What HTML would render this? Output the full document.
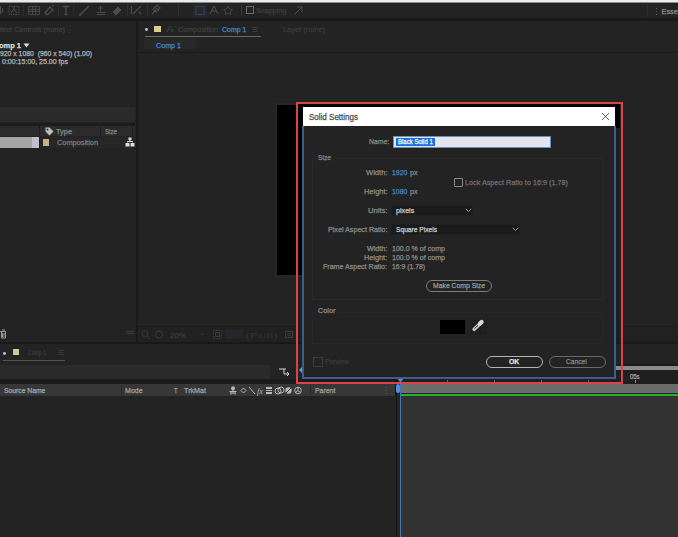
<!DOCTYPE html>
<html><head><meta charset="utf-8">
<style>
*{margin:0;padding:0;box-sizing:border-box}
html,body{width:678px;height:537px;overflow:hidden;background:#232323;font-family:"Liberation Sans",sans-serif;position:relative}
.a{position:absolute}
.t{position:absolute;white-space:pre;transform-origin:0 0;-webkit-text-stroke:0.25px currentColor}
svg{position:absolute;overflow:visible}
</style></head><body>
<div class="a" style="left:0px;top:0px;width:678px;height:2px;background:#ececec;"></div>
<div class="a" style="left:0px;top:2px;width:678px;height:1px;background:#8a8a8a;"></div>
<div class="a" style="left:0px;top:3px;width:678px;height:15px;background:#232323;"></div>
<div class="a" style="left:0px;top:18px;width:678px;height:3px;background:#191919;"></div>
<svg style="left:0;top:0" width="678" height="20" viewBox="0 0 678 20" fill="none" stroke="#4c4c4c" stroke-width="1">
<path d="M0.5 6v8M2.5 8v5"/>
<path d="M9 6.5h10v8h-10z" stroke-dasharray="1.5 1"/><path d="M11 13l3-4 3 4M14 9v-2"/>
<path d="M23.5 4v12" stroke="#2e2e2e"/>
<path d="M28.5 6.5h11v8h-11z M28.5 9.5h11M28.5 11.5h11M32.5 6.5v8M35.5 6.5v8" stroke-width="0.8"/>
<path d="M45 13l5-6 3 3-6 5z M52 6l2-1" stroke-width="1.2"/>
<path d="M58.5 4v12" stroke="#2e2e2e"/>
<path d="M62.5 6.5h7M66 6.5v8M64.5 14.5h3" stroke-width="1.3"/>
<path d="M73.5 4v12" stroke="#2e2e2e"/>
<path d="M80 15l9-9" stroke-width="1.5"/><path d="M79.5 15.5l1.5-1.5" stroke-width="2"/>
<path d="M100.5 6v5M98 8h5M96.5 12.5h9M97 14.5h8" stroke-width="1.2"/>
<path d="M113 12l5-5 3 3-5 5z" fill="#4c4c4c"/>
<path d="M127.5 4v12" stroke="#2e2e2e"/>
<path d="M131.5 6v8M133 14l8-8M139 12l2 2" stroke-width="1.2"/>
<path d="M147.5 4v12" stroke="#2e2e2e"/>
<path d="M152 14l4-4M155 7l4 4M157 5l3 3-4 4-3-3z" stroke-width="1.1"/>
<path d="M178.5 4v12" stroke="#2e2e2e"/>
<rect x="193" y="4" width="14" height="13" fill="#262833" stroke="none"/>
<path d="M196 6.5h8v8h-8z" stroke="#3e4048"/>
<path d="M210 14l4-8 4 8M212 11h4" stroke="#4e4e4e"/>
<path d="M228 6l1.5 3 3 .5-2.2 2 .7 3-3-1.5-3 1.5.7-3-2.2-2 3-.5z" stroke="#4a4a4a" stroke-width="0.9"/>
<path d="M241.5 5v11" stroke="#3a3a3a"/>
<rect x="246.5" y="6.5" width="7" height="7" stroke="#6a6a6a"/>
<path d="M295 14l7-7M297 7h5v5" stroke="#4a4a4a" stroke-width="1"/>
<path d="M647.5 4v13" stroke="#2c2c2c"/>
<path d="M656.5 8v1M656.5 11v1M656.5 14v1" stroke="#5a5a5a"/>
</svg>
<div class="t" style="left:256px;top:7.21px;font-size:7.4px;line-height:7.4px;color:#3e3e3e;font-weight:normal;transform:scaleX(0.976);">Snapping</div>
<div class="t" style="left:661.5px;top:7.71px;font-size:7.4px;line-height:7.4px;color:#8e8e8e;font-weight:normal;transform:scaleX(1.000);">Essentials</div>
<div class="a" style="left:0px;top:21px;width:136px;height:322px;background:#232323;"></div>
<div class="t" style="left:0px;top:25.71px;font-size:7.4px;line-height:7.4px;color:#3e3e3e;font-weight:normal;transform:scaleX(1.001);">fect Controls (none)</div>
<svg style="left:68px;top:25px" width="4" height="9"><path d="M2 1v1M2 4v1M2 7v1" stroke="#3e3e3e"/></svg>
<div class="t" style="left:-1px;top:41.71px;font-size:7.4px;line-height:7.4px;color:#dcdcdc;font-weight:bold;transform:scaleX(1.011);">omp 1</div>
<svg style="left:23px;top:43px" width="8" height="6"><path d="M0.5 0.5h6l-3 4z" fill="#dcdcdc"/></svg>
<div class="t" style="left:0px;top:49.51px;font-size:7.4px;line-height:7.4px;color:#b4b4b4;font-weight:normal;transform:scaleX(0.925);">920 x 1080  (960 x 540) (1.00)</div>
<div class="t" style="left:2px;top:57.71px;font-size:7.4px;line-height:7.4px;color:#b4b4b4;font-weight:normal;transform:scaleX(0.950);">0:00:15:00, 25.00 fps</div>
<div class="a" style="left:0px;top:107px;width:135px;height:15px;background:#2a2a2a;"></div>
<div class="a" style="left:0px;top:123px;width:135px;height:3px;background:#1c1c1c;"></div>
<div class="a" style="left:0px;top:126px;width:135px;height:10px;background:#2b2b2b;"></div>
<div class="a" style="left:100px;top:126px;width:1px;height:10px;background:#1e1e1e;"></div>
<div class="a" style="left:39px;top:126px;width:1px;height:10px;background:#1e1e1e;"></div>
<div class="a" style="left:132px;top:126px;width:1px;height:10px;background:#1e1e1e;"></div>
<svg style="left:44px;top:126px" width="10" height="10"><path d="M1.5 1.5h4l4 4-4 4-4-4z" fill="#bdbdbd"/><circle cx="3.5" cy="3.5" r="0.9" fill="#2b2b2b"/></svg>
<div class="t" style="left:56px;top:127.51px;font-size:7.4px;line-height:7.4px;color:#8c8c8c;font-weight:normal;transform:scaleX(0.998);">Type</div>
<div class="t" style="left:105px;top:127.51px;font-size:7.4px;line-height:7.4px;color:#8a8a8a;font-weight:normal;transform:scaleX(0.834);">Size</div>
<div class="a" style="left:0px;top:137px;width:38px;height:11px;background:#a6a6a6;"></div>
<div class="a" style="left:32px;top:137px;width:6.6px;height:11px;background:#c0c0c8;"></div>
<div class="a" style="left:38.6px;top:137px;width:1.4px;height:11px;background:#1e1e1e;"></div>
<div class="a" style="left:40px;top:137px;width:95px;height:11px;background:#262626;"></div>
<div class="a" style="left:43px;top:139px;width:6px;height:7px;background:#c6b08a;"></div>
<div class="t" style="left:57px;top:138.71px;font-size:7.4px;line-height:7.4px;color:#7c7c7c;font-weight:normal;transform:scaleX(0.998);">Composition</div>
<svg style="left:125px;top:137px" width="10" height="10"><path d="M5 1.5v3M2.5 5.5v-1h5v1" stroke="#dcdcdc" fill="none"/><rect x="3.5" y="0.5" width="3" height="2.5" fill="#dcdcdc"/><rect x="0.5" y="6" width="4" height="3.5" fill="#dcdcdc"/><rect x="5.5" y="6" width="4" height="3.5" fill="#dcdcdc"/></svg>
<svg style="left:0;top:328px" width="8" height="12"><path d="M0 3.5h6M1.5 3v7h4v-7M2 2h3" stroke="#9a9a9a" fill="none"/><path d="M2.5 5v4M4 5v4" stroke="#9a9a9a"/></svg>
<div class="a" style="left:126px;top:331px;width:8px;height:1px;background:#3a3a3a;"></div>
<div class="a" style="left:126px;top:333px;width:8px;height:1px;background:#3a3a3a;"></div>
<div class="a" style="left:135.8px;top:21px;width:2px;height:322px;background:#1a1a1a;"></div>
<div class="a" style="left:137.8px;top:21px;width:540.2px;height:321px;background:#232323;"></div>
<svg style="left:144px;top:27px" width="5" height="5"><circle cx="2.5" cy="2.5" r="1.4" fill="#c8c8c8"/></svg>
<div class="a" style="left:154px;top:26px;width:7px;height:6px;background:#dccb92;"></div>
<svg style="left:166px;top:26px" width="8" height="7"><path d="M1 6l2-5h3M1.5 3.5h2.5M5 3l2 3M7 3l-2 3" stroke="#3e3e3e" fill="none" stroke-width="0.9"/></svg>
<div class="t" style="left:178px;top:25.91px;font-size:7.4px;line-height:7.4px;color:#3e3e3e;font-weight:normal;transform:scaleX(0.974);">Composition</div>
<div class="t" style="left:222px;top:25.91px;font-size:7.4px;line-height:7.4px;color:#3d88d8;font-weight:normal;transform:scaleX(0.946);">Comp 1</div>
<svg style="left:252px;top:26px" width="6" height="8"><path d="M0.5 1.5h5M0.5 3.5h5M0.5 5.5h5" stroke="#3c3c3c"/></svg>
<div class="a" style="left:145px;top:36px;width:116px;height:1px;background:#6a6a6a;"></div>
<div class="t" style="left:283px;top:25.91px;font-size:7.4px;line-height:7.4px;color:#3a3a3a;font-weight:normal;transform:scaleX(1.002);">Layer (none)</div>
<div class="a" style="left:144px;top:38px;width:52px;height:11px;background:#282828;"></div>
<div class="t" style="left:156px;top:41.71px;font-size:7.4px;line-height:7.4px;color:#3d88d8;font-weight:normal;transform:scaleX(0.966);">Comp 1</div>
<div class="a" style="left:137px;top:52px;width:541px;height:1px;background:#1c1c1c;"></div>
<div class="a" style="left:137.8px;top:326px;width:540.2px;height:1px;background:#1b1b1b;"></div>
<div class="a" style="left:137.8px;top:327px;width:540.2px;height:15px;background:#212121;"></div>
<svg style="left:137px;top:327px" width="160" height="15" fill="none" stroke="#3a3a3a">
<circle cx="8" cy="6.5" r="3"/><path d="M10 9l3 3"/>
<circle cx="22" cy="7.5" r="3.5"/>
<path d="M63 6l2 2 2-2"/>
<rect x="76.5" y="3.5" width="8" height="8" stroke-dasharray="1.5 1"/><rect x="78.5" y="5.5" width="4" height="4"/>
<rect x="88" y="3" width="18" height="9" fill="#25262c" stroke="none"/>
<rect x="148.5" y="4.5" width="7" height="6"/><circle cx="152" cy="7.5" r="1.5"/>
</svg>
<div class="t" style="left:170px;top:331.71px;font-size:7.4px;line-height:7.4px;color:#3a3a3a;font-weight:normal;transform:scaleX(1.108);">20%</div>
<div class="t" style="left:245px;top:331.71px;font-size:7.4px;line-height:7.4px;color:#2e2e2e;font-weight:normal;transform:scaleX(1.959);">(Full)</div>
<div class="a" style="left:0px;top:342px;width:678px;height:2px;background:#191919;"></div>
<div class="a" style="left:0px;top:344px;width:678px;height:193px;background:#232323;"></div>
<svg style="left:2px;top:351px" width="5" height="5"><circle cx="2.5" cy="2.5" r="1.4" fill="#c8c8c8"/></svg>
<div class="a" style="left:13px;top:349px;width:6px;height:6px;background:#cfc79a;"></div>
<div class="t" style="left:28px;top:349.21px;font-size:7.4px;line-height:7.4px;color:#3a3a3a;font-weight:normal;transform:scaleX(0.695);">Comp 1</div>
<svg style="left:58px;top:349px" width="6" height="8"><path d="M0.5 1.5h5M0.5 3.5h5M0.5 5.5h5" stroke="#3a3a3a"/></svg>
<div class="a" style="left:3px;top:360px;width:62px;height:1px;background:#545454;"></div>
<div class="a" style="left:0px;top:365px;width:270px;height:14px;background:#2a2a2a;"></div>
<svg style="left:278px;top:366px" width="14" height="12" fill="none" stroke="#d8d8d8" stroke-width="1"><path d="M1 3h5v5h4M6 3h2"/><path d="M9 6l2 2-2 2"/></svg>
<div class="a" style="left:0px;top:379px;width:396px;height:5px;background:#1b1b1b;"></div>
<div class="a" style="left:0px;top:384px;width:396px;height:12px;background:#373737;"></div>
<div class="a" style="left:121px;top:385px;width:1px;height:10px;background:#2a2a2a;"></div>
<div class="a" style="left:309.5px;top:385px;width:1px;height:10px;background:#2a2a2a;"></div>
<svg style="left:384px;top:386px" width="4" height="9"><path d="M2 1v1M2 4v1M2 7v1" stroke="#5a5a5a"/></svg>
<div class="t" style="left:3.7px;top:387.31px;font-size:7.4px;line-height:7.4px;color:#a8a8a8;font-weight:normal;transform:scaleX(0.914);">Source Name</div>
<div class="t" style="left:125px;top:387.31px;font-size:7.4px;line-height:7.4px;color:#a0a0a0;font-weight:normal;transform:scaleX(0.957);">Mode</div>
<div class="t" style="left:173.5px;top:387.31px;font-size:7.4px;line-height:7.4px;color:#a0a0a0;font-weight:normal;transform:scaleX(0.775);">T</div>
<div class="t" style="left:183.5px;top:387.31px;font-size:7.4px;line-height:7.4px;color:#a0a0a0;font-weight:normal;transform:scaleX(0.973);">TrkMat</div>
<svg style="left:228px;top:385px" width="76" height="11" fill="none" stroke="#b8b8b8" stroke-width="1">
<circle cx="5" cy="3.2" r="2" fill="#b8b8b8" stroke="none"/><path d="M1.5 6.5h7M3 6.5v3M7 6.5v3M5 5v4" stroke-width="1.2"/>
<path d="M15.5 3l2.5 2.5-2.5 2.5-2.5-2.5z"/>
<path d="M21 2l6 7"/>
<text x="29" y="8.5" font-family="Liberation Serif" font-style="italic" font-size="8" fill="#b8b8b8" stroke="none">fx</text>
<rect x="38" y="2" width="6" height="7" fill="#b8b8b8" stroke="none"/><path d="M38 4.5h6M38 6.5h6" stroke="#373737"/>
<circle cx="50" cy="6" r="3"/><circle cx="53" cy="5" r="3"/>
<circle cx="60.5" cy="5.5" r="3.2" fill="#b8b8b8" stroke="none"/><path d="M58 8l5-5" stroke="#373737"/>
<circle cx="70" cy="5.5" r="3.3"/><path d="M70 2.5v3l-2.5 2M70 5.5l2.5 2"/>
</svg>
<div class="t" style="left:314.7px;top:387.31px;font-size:7.4px;line-height:7.4px;color:#a0a0a0;font-weight:normal;transform:scaleX(0.932);">Parent</div>
<div class="a" style="left:395px;top:379px;width:1.5px;height:158px;background:#151515;"></div>
<div class="a" style="left:396.5px;top:379px;width:3.5px;height:158px;background:#262626;"></div>
<div class="a" style="left:0px;top:396px;width:396px;height:141px;background:#232323;"></div>
<div class="a" style="left:400px;top:396px;width:278px;height:141px;background:#323232;"></div>
<div class="a" style="left:397px;top:344px;width:281px;height:22px;background:#232323;"></div>
<div class="a" style="left:397px;top:364px;width:281px;height:2px;background:#1b1b1b;"></div>
<div class="a" style="left:397px;top:366px;width:281px;height:4px;background:#8a8a8a;"></div>
<div class="a" style="left:397px;top:370px;width:281px;height:14px;background:#1f1f1f;"></div>
<div class="t" style="left:629.8px;top:372.88px;font-size:7.2px;line-height:7.2px;color:#a8a8a8;font-weight:normal;transform:scaleX(0.828);">05s</div>
<div class="a" style="left:635px;top:380px;width:1px;height:3px;background:#8a8a8a;"></div>
<div class="a" style="left:447px;top:380px;width:1px;height:2px;background:#6a6a6a;"></div>
<div class="a" style="left:494px;top:380px;width:1px;height:2px;background:#6a6a6a;"></div>
<div class="a" style="left:541px;top:380px;width:1px;height:2px;background:#6a6a6a;"></div>
<div class="a" style="left:588px;top:380px;width:1px;height:2px;background:#6a6a6a;"></div>
<div class="a" style="left:400px;top:384px;width:278px;height:9px;background:#6b6b6b;"></div>
<div class="a" style="left:400px;top:393.6px;width:278px;height:2.8px;background:#24b02c;"></div>
<div class="a" style="left:400.2px;top:377px;width:1.2px;height:160px;background:#4776b0;"></div>
<div class="a" style="left:396px;top:384px;width:4px;height:9px;background:#4a8ee0;border-radius:2px"></div>
<svg style="left:396px;top:377px" width="9" height="7"><path d="M0.5 0.5h8l-4 5z" fill="#4a8ee0"/></svg>
<div class="a" style="left:298px;top:275px;width:4px;height:67px;background:#1e1e1e;"></div>
<div class="a" style="left:616px;top:128px;width:4px;height:214px;background:#1e1e1e;"></div>
<div class="a" style="left:275px;top:103px;width:27px;height:174px;background:#272727;"></div>
<div class="a" style="left:277px;top:105px;width:25px;height:170px;background:#000;"></div>
<div class="a" style="left:298px;top:104px;width:322px;height:24px;background:#000;"></div>
<div class="a" style="left:295.7px;top:102px;width:327.6px;height:282.2px;border:2.8px solid #dc4246"></div>
<div class="a" style="left:301.8px;top:126px;width:314.4px;height:253px;background:#232323;border:2px solid #3b5d8f;border-top:none"></div>
<svg style="left:298px;top:366px" width="5" height="8"><path d="M4 1v6L1 4z" fill="#6a9ad0"/></svg>
<div class="a" style="left:303px;top:107px;width:312px;height:19px;background:#ffffff;"></div>
<div class="t" style="left:308.5px;top:112.01px;font-size:9.4px;line-height:9.4px;color:#474747;font-weight:normal;transform:scaleX(0.855);">Solid Settings</div>
<svg style="left:601px;top:112px" width="9" height="9"><path d="M1 1l7 7M8 1l-7 7" stroke="#4a4a4a" stroke-width="0.9"/></svg>
<div class="t" style="left:368.8px;top:137.94px;font-size:7.6px;line-height:7.6px;color:#8c8c8c;font-weight:normal;transform:scaleX(0.898);">Name:</div>
<div class="a" style="left:393px;top:136px;width:158px;height:12px;background:#e4e4ea;border:1px solid #6a8ec4"></div>
<div class="a" style="left:395.5px;top:138px;width:39px;height:8px;background:#1b6fd9;"></div>
<div class="t" style="left:397.8px;top:138.14px;font-size:7.6px;line-height:7.6px;color:#ffffff;font-weight:normal;transform:scaleX(0.793);">Black Solid 1</div>
<div class="a" style="left:312px;top:158px;width:292px;height:142px;border:1px solid #282828"></div>
<div class="a" style="left:315px;top:154px;width:20px;height:8px;background:#232323;"></div>
<div class="t" style="left:318px;top:153.91px;font-size:7.4px;line-height:7.4px;color:#8a8a8a;font-weight:normal;transform:scaleX(0.903);">Size</div>
<div class="t" style="left:366px;top:169.14px;font-size:7.6px;line-height:7.6px;color:#8c8c8c;font-weight:normal;transform:scaleX(0.999);">Width:</div>
<div class="t" style="left:392.3px;top:169.14px;font-size:7.6px;line-height:7.6px;color:#3f84cc;font-weight:normal;transform:scaleX(0.905);">1920</div>
<div class="t" style="left:410px;top:169.14px;font-size:7.6px;line-height:7.6px;color:#8c8c8c;font-weight:normal;transform:scaleX(0.934);">px</div>
<div class="t" style="left:364px;top:187.94px;font-size:7.6px;line-height:7.6px;color:#8c8c8c;font-weight:normal;transform:scaleX(0.977);">Height:</div>
<div class="t" style="left:392.3px;top:187.94px;font-size:7.6px;line-height:7.6px;color:#3f84cc;font-weight:normal;transform:scaleX(0.905);">1080</div>
<div class="t" style="left:410px;top:187.94px;font-size:7.6px;line-height:7.6px;color:#8c8c8c;font-weight:normal;transform:scaleX(0.934);">px</div>
<div class="a" style="left:454px;top:178px;width:9px;height:9px;border:1px solid #8a8a8a;border-radius:1px"></div>
<div class="t" style="left:464.5px;top:178.54px;font-size:7.6px;line-height:7.6px;color:#707070;font-weight:normal;transform:scaleX(0.952);">Lock Aspect Ratio to 16:9 (1.78)</div>
<div class="t" style="left:368px;top:206.84px;font-size:7.6px;line-height:7.6px;color:#8c8c8c;font-weight:normal;transform:scaleX(1.004);">Units:</div>
<div class="a" style="left:391px;top:205px;width:82px;height:11px;background:#1b1b1b;border:1px solid #202020"></div>
<div class="t" style="left:396px;top:206.84px;font-size:7.6px;line-height:7.6px;color:#d0d0d0;font-weight:normal;transform:scaleX(0.942);">pixels</div>
<svg style="left:465px;top:208px" width="7" height="5"><path d="M0.8 0.8l2.7 2.7 2.7-2.7" stroke="#a0a0a0" fill="none" stroke-width="1"/></svg>
<div class="t" style="left:327.7px;top:225.54px;font-size:7.6px;line-height:7.6px;color:#8c8c8c;font-weight:normal;transform:scaleX(0.941);">Pixel Aspect Ratio:</div>
<div class="a" style="left:391px;top:224px;width:129px;height:11px;background:#1b1b1b;border:1px solid #202020"></div>
<div class="t" style="left:396px;top:225.54px;font-size:7.6px;line-height:7.6px;color:#d0d0d0;font-weight:normal;transform:scaleX(0.875);">Square Pixels</div>
<svg style="left:512px;top:227px" width="7" height="5"><path d="M0.8 0.8l2.7 2.7 2.7-2.7" stroke="#a0a0a0" fill="none" stroke-width="1"/></svg>
<div class="t" style="left:366.7px;top:245.01px;font-size:7.4px;line-height:7.4px;color:#8c8c8c;font-weight:normal;transform:scaleX(0.969);">Width:</div>
<div class="t" style="left:392px;top:245.01px;font-size:7.4px;line-height:7.4px;color:#8c8c8c;font-weight:normal;transform:scaleX(0.955);">100.0 % of comp</div>
<div class="t" style="left:364px;top:253.81px;font-size:7.4px;line-height:7.4px;color:#8c8c8c;font-weight:normal;transform:scaleX(0.982);">Height:</div>
<div class="t" style="left:392px;top:253.81px;font-size:7.4px;line-height:7.4px;color:#8c8c8c;font-weight:normal;transform:scaleX(0.955);">100.0 % of comp</div>
<div class="t" style="left:323px;top:262.71px;font-size:7.4px;line-height:7.4px;color:#8c8c8c;font-weight:normal;transform:scaleX(0.956);">Frame Aspect Ratio:</div>
<div class="t" style="left:392px;top:262.71px;font-size:7.4px;line-height:7.4px;color:#8c8c8c;font-weight:normal;transform:scaleX(0.923);">16:9 (1.78)</div>
<div class="a" style="left:426px;top:279.6px;width:66px;height:12px;border:1px solid #7c7c7c;border-radius:6px"></div>
<div class="t" style="left:433px;top:281.94px;font-size:7.6px;line-height:7.6px;color:#9c9c9c;font-weight:normal;transform:scaleX(0.899);">Make Comp Size</div>
<div class="a" style="left:312px;top:311.5px;width:291px;height:32px;border:1px solid #282828"></div>
<div class="a" style="left:315px;top:306px;width:23px;height:8px;background:#232323;"></div>
<div class="t" style="left:318.4px;top:306.91px;font-size:7.4px;line-height:7.4px;color:#8c8c8c;font-weight:normal;transform:scaleX(0.985);">Color</div>
<div class="a" style="left:440px;top:320px;width:25px;height:13.5px;background:#000;"></div>
<div class="a" style="left:471px;top:319.7px;width:16px;height:15.3px;background:#1f1f1f;"></div>
<svg style="left:471px;top:320px" width="16" height="15"><path d="M3.2 9.3L10.2 2.6" stroke="#c6c6c6" stroke-width="3.6" stroke-linecap="round"/><path d="M9 3.5l1.6-1.6" stroke="#d8d8d8" stroke-width="4.2" stroke-linecap="round"/><path d="M3.6 8.6L7 5.3" stroke="#333" stroke-width="1"/></svg>
<div class="a" style="left:312.5px;top:356.6px;width:10px;height:10px;border:1px solid #3a3a3a"></div>
<div class="t" style="left:325px;top:358.21px;font-size:7.4px;line-height:7.4px;color:#3a3a3a;font-weight:normal;transform:scaleX(0.913);">Preview</div>
<div class="a" style="left:486px;top:355.5px;width:57px;height:12px;border:1.2px solid #b4b4b4;border-radius:6px"></div>
<div class="t" style="left:509px;top:358.14px;font-size:7.6px;line-height:7.6px;color:#e2e2e2;font-weight:bold;transform:scaleX(0.904);">OK</div>
<div class="a" style="left:548.6px;top:355.5px;width:57px;height:12px;border:1.2px solid #6a6a6a;border-radius:6px"></div>
<div class="t" style="left:566.3px;top:358.14px;font-size:7.6px;line-height:7.6px;color:#8a8a8a;font-weight:normal;transform:scaleX(0.876);">Cancel</div>
</body></html>
